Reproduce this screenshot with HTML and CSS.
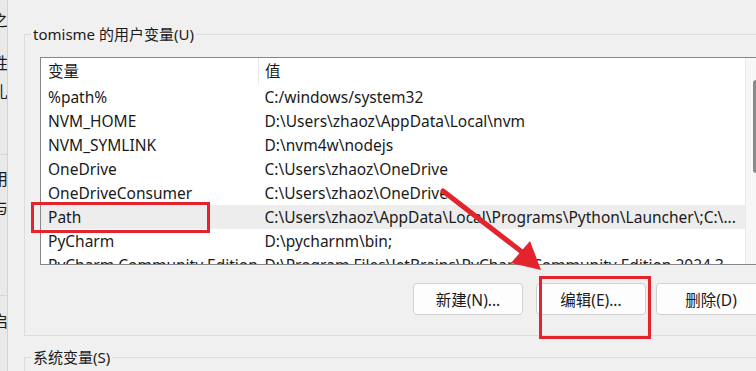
FILE: index.html
```html
<!DOCTYPE html>
<html lang="zh-CN">
<head>
    <meta charset="UTF-8">
    <meta name="viewport" content="width=device-width, initial-scale=1.0">
    <title>环境变量</title>
    <link rel="stylesheet" href="styles.css">
</head>
<body>
    <div class="window">
        <aside class="side">
            <div class="side-item first">之</div>
            <div class="side-item">性</div>
            <div class="side-item">礼</div>
            <div class="side-sep"></div>
            <div class="side-item">用</div>
            <div class="side-item">与</div>
            <div class="side-sep second"></div>
            <div class="side-item">启</div>
        </aside>

        <main class="dialog">
            <fieldset class="group user-vars">
                <legend>tomisme 的用户变量(U)</legend>

                <div class="list">
                    <div class="list-body">
                        <table class="vars">
                            <tr class="head">
                                <th class="name">变量</th>
                                <th class="value">值</th>
                            </tr>
                            <tr><td class="name">%path%</td><td class="value">C:/windows/system32</td></tr>
                            <tr><td class="name">NVM_HOME</td><td class="value">D:\Users\zhaoz\AppData\Local\nvm</td></tr>
                            <tr><td class="name">NVM_SYMLINK</td><td class="value">D:\nvm4w\nodejs</td></tr>
                            <tr><td class="name">OneDrive</td><td class="value">C:\Users\zhaoz\OneDrive</td></tr>
                            <tr><td class="name">OneDriveConsumer</td><td class="value">C:\Users\zhaoz\OneDrive</td></tr>
                            <tr class="selected"><td class="name">Path</td><td class="value">C:\Users\zhaoz\AppData\Local\Programs\Python\Launcher\;C:\...</td></tr>
                            <tr><td class="name">PyCharm</td><td class="value">D:\pycharnm\bin;</td></tr>
                            <tr><td class="name">PyCharm Community Edition</td><td class="value">D:\Program Files\JetBrains\PyCharm Community Edition 2024.3</td></tr>
                        </table>
                    </div>
                    <div class="scrollbar"><div class="thumb"></div></div>
                </div>

                <div class="buttons">
                    <button type="button" class="btn new">新建(N)...</button>
                    <button type="button" class="btn">编辑(E)...</button>
                    <button type="button" class="btn">删除(D)</button>
                </div>
            </fieldset>

            <fieldset class="group sys-vars">
                <legend>系统变量(S)</legend>
            </fieldset>
        </main>

        <!-- red annotations drawn over the screenshot -->
        <div class="mark mark-path"></div>
        <div class="mark mark-edit"></div>
        <svg class="arrow" width="756" height="371" viewBox="0 0 756 371">
            <line x1="443" y1="191" x2="522" y2="252" stroke="#e3242d" stroke-width="5" stroke-linecap="round"/>
            <polygon points="541,270 511,263 530,241" fill="#e3242d"/>
        </svg>
    </div>
</body>
</html>
```

FILE: styles.css
```css
html, body {
    margin: 0;
    padding: 0;
}
body {
    width: 756px;
    height: 371px;
    overflow: hidden;
    background-color: #f0f0f0;
    font-family: "Noto Sans", "Noto Sans CJK SC", sans-serif;
    font-size: 15px;
    color: #1a1a1a;
}
.window {
    position: relative;
    display: flex;
    height: 371px;
    overflow: hidden;
}

/* left window peeking in */
.side {
    flex: none;
    width: 7px;
    height: 371px;
    overflow: hidden;
    background-color: #e9e9e9;
    border-right: 1px solid #d2d2d2;
}
.side-item {
    margin-left: -8px;
    height: 29px;
    line-height: 20px;
    font-size: 16px;
    white-space: nowrap;
}
.side-item.first {
    margin-top: 10px;
    height: 43px;
}
.side-sep {
    height: 1px;
    background-color: #d6d6d6;
    margin: 43px 0 14px;
}
.side-sep.second {
    margin: 68px 0 15px;
}

/* dialog */
.dialog {
    flex: none;
    width: 800px;
    padding-top: 24px;
}
.group {
    box-sizing: border-box;
    width: 759px;
    margin: 0 0 0 16px;
    border: 1px solid #dcdcdc;
    padding: 13px 16px 20px 15px;
}
.group legend {
    margin-left: -9px;
    padding: 0 2px;
    line-height: 20px;
}
.sys-vars {
    margin-top: 11px;
    height: 60px;
    padding: 0;
}
.sys-vars legend {
    margin-left: 6px;
}

/* list view */
.list {
    display: flex;
    height: 208px;
    box-sizing: border-box;
    border: 1px solid #878787;
    border-right: none;
    background-color: #fff;
}
.list-body {
    flex: 1;
    overflow: hidden;
}
.vars {
    width: 100%;
    border-collapse: collapse;
    table-layout: fixed;
    font-size: 15.5px;
}
.vars th,
.vars td {
    padding: 0 0 0 7px;
    height: 24px;
    line-height: 24px;
    text-align: left;
    font-weight: normal;
    white-space: nowrap;
    overflow: hidden;
}
.vars .name {
    width: 210px;
}
.vars td.value,
.vars th.value {
    padding-left: 6px;
}
.vars .head th {
    height: 27px;
    line-height: 27px;
}
.vars .head th.name {
    border-right: 1px solid #e9e9e9;
}
.vars .selected td {
    background-color: #ededed;
}
.scrollbar {
    flex: none;
    width: 20px;
    border-left: 1px solid #e9e9e9;
    background-color: #f7f7f7;
}
.thumb {
    width: 6px;
    height: 93px;
    margin: 22px 0 0 7px;
    border-radius: 3px;
    background-color: #8a8a8a;
}

/* buttons */
.buttons {
    display: flex;
    justify-content: flex-end;
    gap: 10px;
    margin-top: 18px;
}
.btn {
    width: 110px;
    height: 32px;
    padding: 0;
    font-family: inherit;
    font-size: 15.5px;
    color: #1a1a1a;
    background-color: #fdfdfd;
    border: 1px solid #d0d0d0;
    border-radius: 4px;
}
.btn.new {
    margin-right: 3px;
}

/* annotations */
.mark {
    position: absolute;
    border: 3px solid #e3242d;
    box-sizing: border-box;
}
.mark-path {
    left: 31px;
    top: 202px;
    width: 179px;
    height: 31px;
}
.mark-edit {
    left: 539px;
    top: 276px;
    width: 112px;
    height: 63px;
}
.arrow {
    position: absolute;
    left: 0;
    top: 0;
    pointer-events: none;
}
```
